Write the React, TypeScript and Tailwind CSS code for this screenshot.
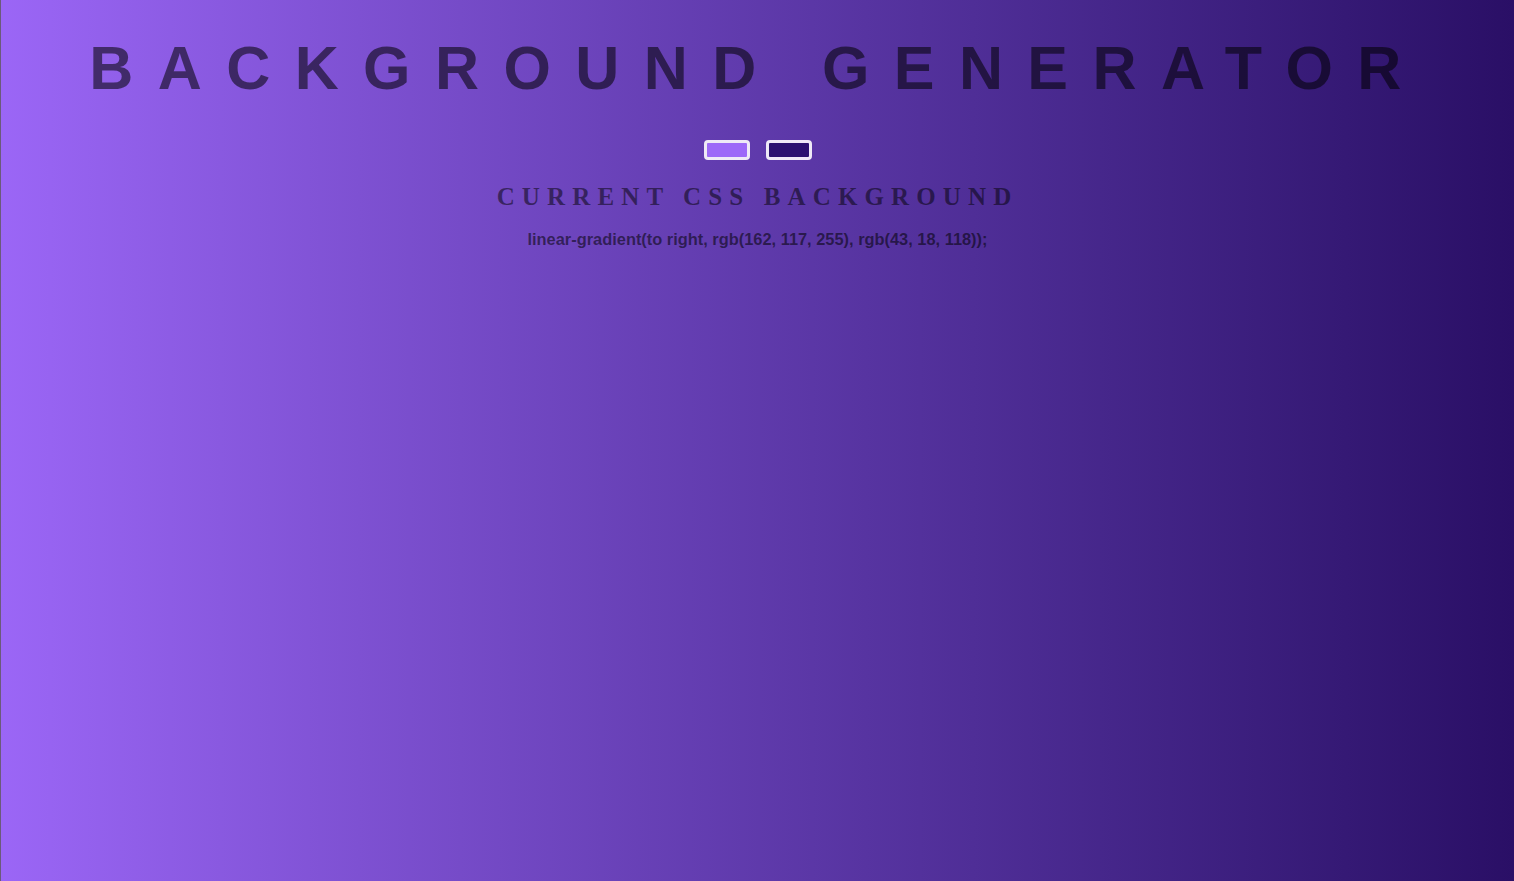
export default function App() {
  const color1 = "#9d69f8";
  const color2 = "#2b1270";

  return (
    <div className="min-h-[881px] w-full bg-linear-to-r from-[#9b66f6] to-[#2a0f66] border-l border-l-[#6b5a7a] flex flex-col items-center text-center">
      {/* Title */}
      <h1 className="mt-[33px] font-['Liberation_Sans',Arial,sans-serif] font-bold text-[61px] leading-[70px] tracking-[0.4em] text-black/55">
        BACKGROUND GENERATOR
      </h1>

      {/* Colour pickers */}
      <div className="mt-[37px] flex gap-[16px]">
        <div className="w-[46px] h-[20px] rounded-[4px] border-[3px] border-[#efeaf7]" style={{ backgroundColor: color1 }} />
        <div className="w-[46px] h-[20px] rounded-[4px] border-[3px] border-[#efeaf7]" style={{ backgroundColor: color2 }} />
      </div>

      <h3 className="mt-[23px] font-['Liberation_Serif','Times_New_Roman',serif] font-bold text-[25px] leading-[28px] tracking-[0.285em] text-black/50">
        CURRENT CSS BACKGROUND
      </h3>

      <p className="mt-[18px] font-['Liberation_Sans',Arial,sans-serif] font-bold text-[16.4px] leading-[20px] text-black/55">
        linear-gradient(to right, rgb(162, 117, 255), rgb(43, 18, 118));
      </p>
    </div>
  );
}
